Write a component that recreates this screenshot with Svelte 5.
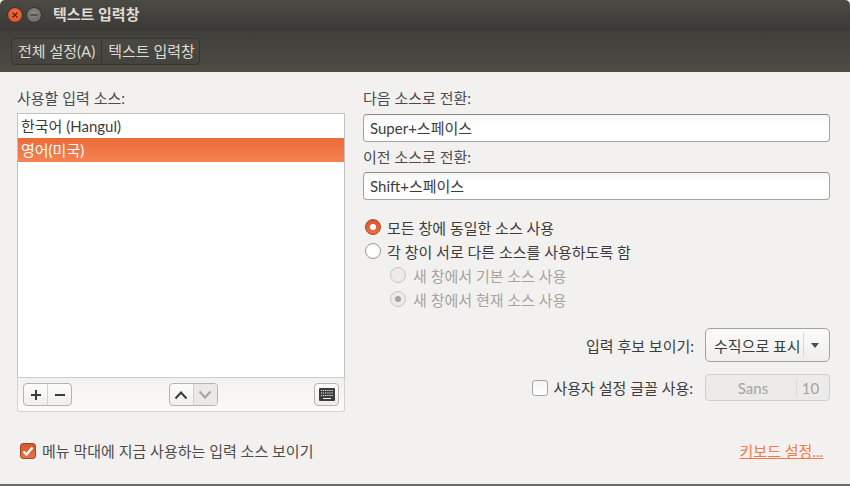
<script>
  let sources = [
    { name: '한국어 (Hangul)', selected: false },
    { name: '영어(미국)', selected: true }
  ];
</script>

<div class="window">
  <header class="titlebar">
    <button class="wm wm--close" aria-label="닫기">
      <svg width="8" height="8" viewBox="0 0 8 8"><path d="M1.5 1.5l5 5M6.5 1.5l-5 5" stroke="#5e1a08" stroke-width="1.3" fill="none"/></svg>
    </button>
    <button class="wm wm--min" aria-label="최소화">
      <svg width="8" height="8" viewBox="0 0 8 8"><path d="M0.5 4h7" stroke="#3a3935" stroke-width="1.3" fill="none"/></svg>
    </button>
    <span class="titlebar__title">텍스트 입력창</span>
  </header>

  <nav class="toolbar">
    <div class="crumbs">
      <span class="crumb">전체 설정(A)</span>
      <span class="crumb crumb--current">텍스트 입력창</span>
    </div>
  </nav>

  <main class="content">
    <div class="columns">
      <section class="sources">
        <div class="label">사용할 입력 소스:</div>
        <div class="list">
          {#each sources as s}
            <div class="list__row" class:list__row--selected={s.selected}>{s.name}</div>
          {/each}
        </div>
        <div class="list-tools">
          <div class="btn-group">
            <span class="tool">
              <svg width="12" height="12" viewBox="0 0 12 12"><path d="M6 1v10M1 6h10" stroke="#3c3c3c" stroke-width="2" fill="none"/></svg>
            </span>
            <span class="tool">
              <svg width="12" height="12" viewBox="0 0 12 12"><path d="M1 6h10" stroke="#3c3c3c" stroke-width="2" fill="none"/></svg>
            </span>
          </div>
          <div class="btn-group">
            <span class="tool">
              <svg width="14" height="10" viewBox="0 0 14 10"><path d="M1.5 8.5L7 2.5l5.5 6" stroke="#3c3c3c" stroke-width="2" fill="none"/></svg>
            </span>
            <span class="tool tool--disabled">
              <svg width="14" height="10" viewBox="0 0 14 10"><path d="M1.5 1.5L7 7.5l5.5-6" stroke="#a3a3a0" stroke-width="2" fill="none"/></svg>
            </span>
          </div>
          <div class="btn-group">
            <span class="tool tool--single">
              <svg width="16" height="13" viewBox="0 0 16 13">
                <rect width="16" height="13" rx="1" fill="#3c3c3c"/>
                <path d="M2 2.5h12M2 5h12M2 7.5h12" stroke="#f4f4f3" stroke-width="1" stroke-dasharray="1.2 0.9" fill="none"/>
                <path d="M4 10.5h8" stroke="#f4f4f3" stroke-width="1.2" fill="none"/>
              </svg>
            </span>
          </div>
        </div>
      </section>

      <section class="options">
        <div class="label">다음 소스로 전환:</div>
        <div class="entry">Super+스페이스</div>
        <div class="label label--second">이전 소스로 전환:</div>
        <div class="entry">Shift+스페이스</div>

        <div class="radios">
          <div class="radio-row"><span class="radio radio--on"></span>모든 창에 동일한 소스 사용</div>
          <div class="radio-row"><span class="radio"></span>각 창이 서로 다른 소스를 사용하도록 함</div>
          <div class="radio-row radio-row--sub radio-row--disabled"><span class="radio radio--disabled"></span>새 창에서 기본 소스 사용</div>
          <div class="radio-row radio-row--sub radio-row--disabled"><span class="radio radio--disabled radio--dot"></span>새 창에서 현재 소스 사용</div>
        </div>

        <div class="form-row form-row--combo">
          <span>입력 후보 보이기:</span>
          <div class="combo">
            <span class="combo__value">수직으로 표시</span>
            <span class="combo__arrow"><i></i></span>
          </div>
        </div>
        <div class="form-row form-row--font">
          <span class="check-label"><span class="check"></span>사용자 설정 글꼴 사용:</span>
          <div class="fontbtn">
            <span class="fontbtn__name">Sans</span>
            <span class="fontbtn__size">10</span>
          </div>
        </div>
      </section>
    </div>

    <footer class="footer">
      <span class="check-label">
        <span class="check check--on">
          <svg width="14" height="14" viewBox="0 0 14 14"><path d="M2.5 7.5l3 3 6-7" stroke="#fff" stroke-width="2.4" fill="none"/></svg>
        </span>
        메뉴 막대에 지금 사용하는 입력 소스 보이기
      </span>
      <span class="link">키보드 설정...</span>
    </footer>
  </main>
</div>

<style>
  :global(body) {
    margin: 0;
    background: #f2f1ef;
  }

  .window {
    width: 850px;
    height: 486px;
    display: flex;
    flex-direction: column;
    overflow: hidden;
    font-family: Lato, "Noto Sans CJK KR", sans-serif;
    font-size: 15px;
    color: #3c3c3c;
    background: #f2f1ef;
    border-bottom: 2px solid #6a6a68;
    box-sizing: border-box;
  }

  .titlebar {
    height: 29px;
    flex: none;
    display: flex;
    align-items: center;
    padding: 0 0 0 7px;
    background: linear-gradient(#4c4a45, #3b3a36);
    border-radius: 5px 5px 0 0;
  }

  .wm {
    width: 16px;
    height: 16px;
    padding: 0;
    border: 1px solid #33322e;
    border-radius: 50%;
    display: flex;
    align-items: center;
    justify-content: center;
    box-sizing: border-box;
    margin-right: 3px;
  }

  .wm--close {
    background: radial-gradient(circle at 50% 40%, #f2764a, #d9481c);
  }

  .wm--min {
    background: radial-gradient(circle at 50% 40%, #8a8984, #64635e);
  }

  .titlebar__title {
    margin-left: 8px;
    margin-bottom: 2px;
    font-weight: 700;
    color: #dfdbd2;
  }

  .toolbar {
    height: 43px;
    flex: none;
    box-sizing: border-box;
    padding: 8px 0 0 11px;
    background: linear-gradient(#3f3e3a, #4f4c45);
    border-top: 1px solid #37352f;
  }

  .crumbs {
    display: inline-flex;
    height: 27px;
    box-sizing: border-box;
    border: 1px solid #35342f;
    border-radius: 4px;
    background: linear-gradient(#4a4842, #45433d);
  }

  .crumb {
    padding: 0 6px;
    line-height: 25px;
    color: #dfdbd2;
    white-space: nowrap;
  }

  .crumb--current {
    border-left: 1px solid #35342f;
    padding-right: 4px;
  }

  .content {
    flex: 1;
    display: flex;
    flex-direction: column;
    padding: 16px 20px 0 17px;
  }

  .columns {
    display: grid;
    grid-template-columns: 328px 467px;
    column-gap: 18px;
  }

  .label {
    height: 20px;
    line-height: 20px;
    color: #4c4c4c;
  }

  .sources .label {
    margin-bottom: 5px;
  }

  .list {
    height: 265px;
    box-sizing: border-box;
    background: #fff;
    border: 1px solid #c3c1bc;
    border-bottom-color: #cfcdc9;
  }

  .list__row {
    height: 24px;
    line-height: 24px;
    padding-left: 3px;
    color: #3c3c3c;
  }

  .list__row--selected {
    background: linear-gradient(#eb6b3a, #f58350);
    color: #fff;
  }

  .list-tools {
    height: 34px;
    box-sizing: border-box;
    display: flex;
    justify-content: space-between;
    align-items: center;
    padding: 0 5px;
    background: linear-gradient(#f2f1ef, #fbfbfa);
    border: 1px solid #d5d3cf;
    border-top: 0;
    border-radius: 0 0 3px 3px;
  }

  .btn-group {
    display: flex;
    height: 23px;
    box-sizing: border-box;
    border: 1px solid #b5b3ae;
    border-radius: 4px;
    overflow: hidden;
    background: linear-gradient(#fdfdfc, #efeeec);
  }

  .tool {
    width: 23px;
    display: flex;
    align-items: center;
    justify-content: center;
  }

  .tool + .tool {
    border-left: 1px solid #d3d1cc;
  }

  .tool--disabled {
    background: #eae9e7;
  }

  .options > .label:first-child {
    margin-bottom: 6px;
  }

  .label--second {
    margin-top: 5px;
    margin-bottom: 5px;
  }

  .entry {
    height: 28px;
    line-height: 26px;
    box-sizing: border-box;
    padding-left: 6px;
    color: #3c3c3c;
    border: 1px solid #a5a39f;
    border-top-color: #8e8c88;
    border-radius: 4px;
    background: linear-gradient(#f6f6f5, #fff 40%);
  }

  .radios {
    margin-top: 15px;
    display: flex;
    flex-direction: column;
  }

  .radio-row {
    height: 24px;
    display: flex;
    align-items: center;
    gap: 6px;
    padding-left: 2px;
    color: #3c3c3c;
  }

  .radio-row--sub {
    padding-left: 27px;
    gap: 7px;
  }

  .radio-row--disabled {
    color: #a5a4a1;
  }

  .radio {
    width: 16px;
    height: 16px;
    box-sizing: border-box;
    flex: none;
    border: 1px solid #9a9894;
    border-radius: 50%;
    background: #fff;
    display: flex;
    align-items: center;
    justify-content: center;
  }

  .radio--on {
    border-color: #a8461f;
    background: linear-gradient(#d4582e, #e77245);
  }

  .radio--on::after {
    content: "";
    width: 6px;
    height: 6px;
    border-radius: 50%;
    background: #fff;
  }

  .radio--disabled {
    border-color: #c6c5c2;
    background: #ecebe9;
  }

  .radio--dot::after {
    content: "";
    width: 6px;
    height: 6px;
    border-radius: 50%;
    background: #a5a4a1;
  }

  .form-row {
    display: flex;
    justify-content: flex-end;
    align-items: center;
    gap: 11px;
  }

  .form-row--combo {
    margin-top: 17px;
  }

  .form-row--font {
    margin-top: 12px;
    gap: 12px;
  }

  .combo {
    width: 125px;
    height: 34px;
    box-sizing: border-box;
    display: flex;
    align-items: center;
    border: 1px solid #a5a39f;
    border-radius: 5px;
    background: linear-gradient(#fcfcfb, #efeeec);
    color: #3c3c3c;
  }

  .combo__value {
    flex: 1;
    padding-left: 8px;
    white-space: nowrap;
  }

  .combo__arrow {
    width: 22px;
    height: 24px;
    flex: none;
    padding-right: 3px;
    display: flex;
    align-items: center;
    justify-content: center;
    border-left: 1px solid #d9d7d3;
  }

  .combo__arrow i {
    border-left: 4px solid transparent;
    border-right: 4px solid transparent;
    border-top: 5px solid #4c4c4c;
  }

  .check-label {
    display: inline-flex;
    align-items: center;
    gap: 6px;
  }

  .check {
    width: 16px;
    height: 16px;
    box-sizing: border-box;
    flex: none;
    display: flex;
    align-items: center;
    justify-content: center;
    border: 1px solid #a5a39f;
    border-radius: 3px;
    background: linear-gradient(#f4f3f2, #fff);
  }

  .check--on {
    border-color: #a8461f;
    background: linear-gradient(#d4582e, #e77245);
  }

  .fontbtn {
    width: 125px;
    height: 27px;
    box-sizing: border-box;
    display: flex;
    align-items: center;
    border: 1px solid #d0cfcb;
    border-radius: 4px;
    background: #ecebe9;
    color: #a5a4a1;
  }

  .fontbtn__name {
    flex: 1;
    text-align: center;
    padding-left: 4px;
  }

  .fontbtn__size {
    width: 27px;
    padding-right: 5px;
    text-align: center;
    border-left: 1px solid #dcdbd8;
    line-height: 18px;
  }

  .footer {
    margin-top: 28px;
    display: flex;
    justify-content: space-between;
    align-items: center;
    padding: 0 7px 0 3px;
    color: #4c4c4c;
  }

  .link {
    color: #f47b45;
    text-decoration: underline;
  }
</style>
